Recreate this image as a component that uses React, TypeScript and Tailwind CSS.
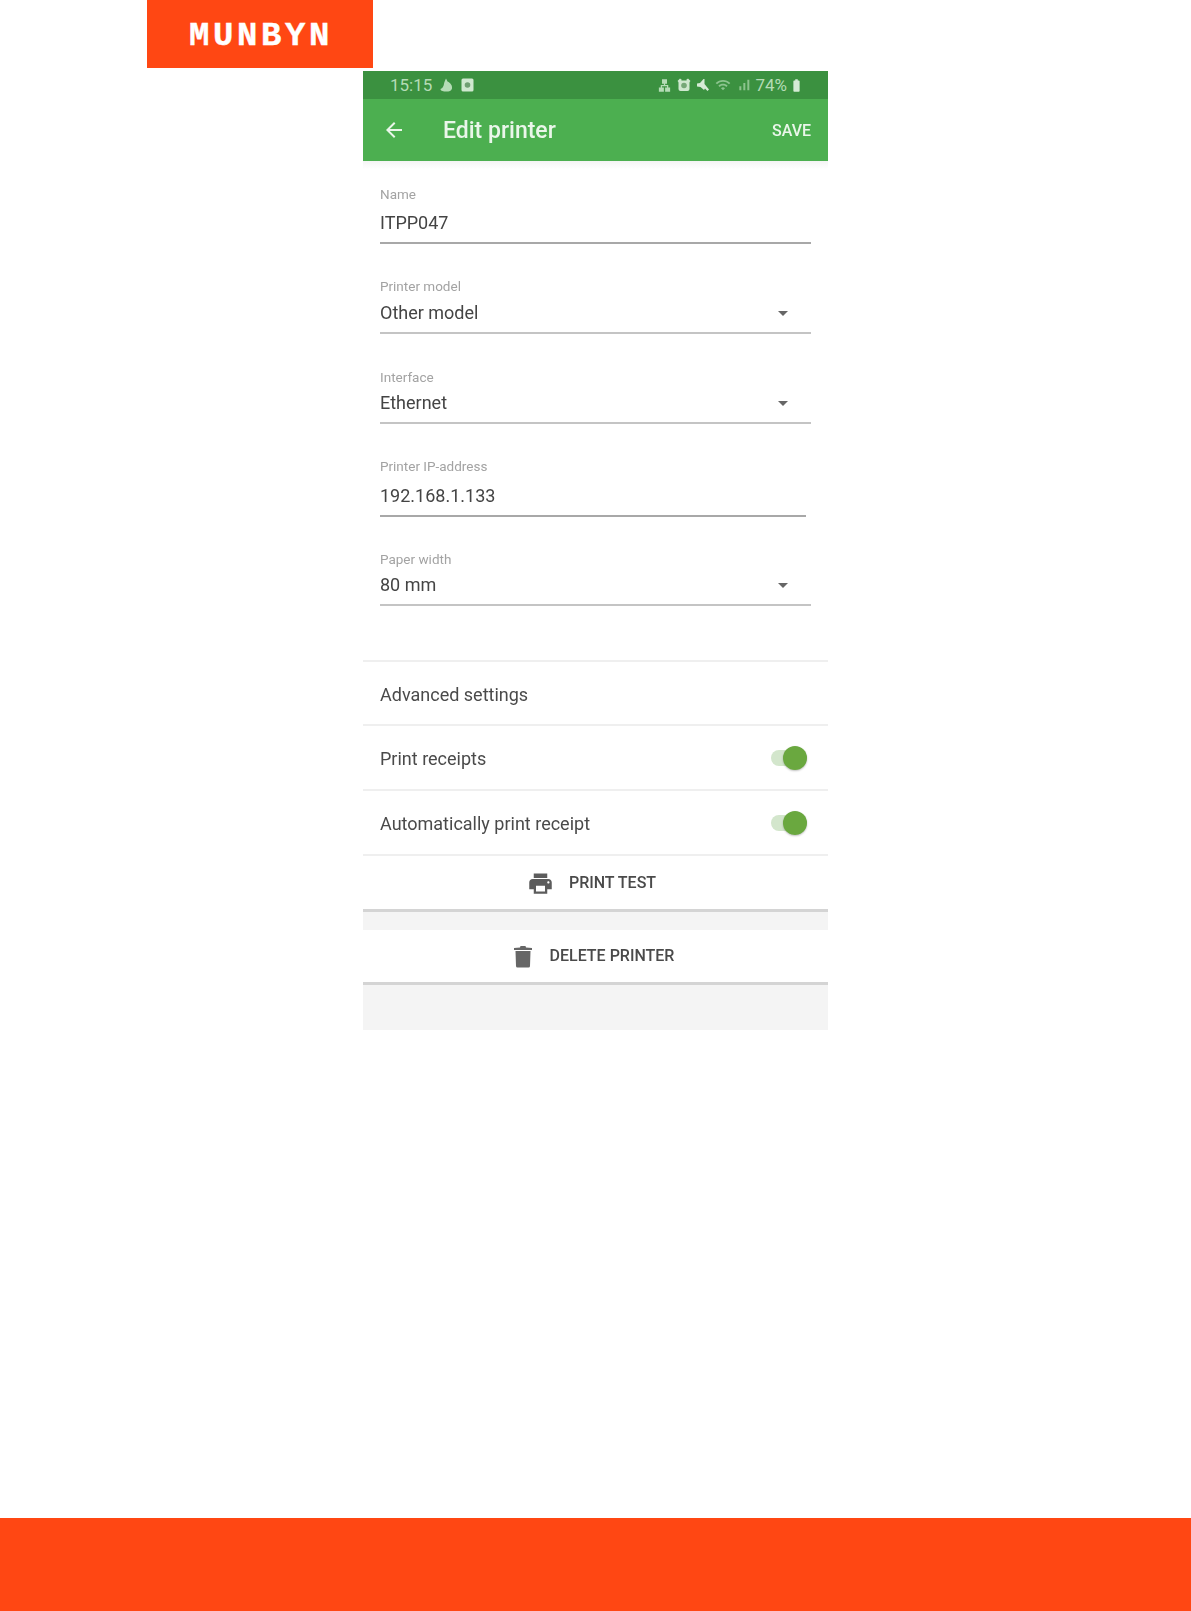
import React from "react";
import { MdArrowBack, MdArrowDropDown, MdPrint, MdWifi, MdSignalCellularAlt, MdBatteryFull, MdLan } from "react-icons/md";

const fields = [
  { label: "Name", value: "ITPP047", box: "mt-0", valueGap: "mt-[9px]", lineGap: "mt-[7px]", line: "w-[431px] bg-[#a8a8a8]", drop: false },
  { label: "Printer model", value: "Other model", box: "mt-[34px]", valueGap: "mt-[7px]", lineGap: "mt-[7px]", line: "w-[431px] bg-[#c4c4c4]", drop: true },
  { label: "Interface", value: "Ethernet", box: "mt-[35px]", valueGap: "mt-[6px]", lineGap: "mt-[7px]", line: "w-[431px] bg-[#c4c4c4]", drop: true },
  { label: "Printer IP-address", value: "192.168.1.133", box: "mt-[34px]", valueGap: "mt-[10px]", lineGap: "mt-[7px]", line: "w-[426px] bg-[#a8a8a8]", drop: false },
  { label: "Paper width", value: "80 mm", box: "mt-[34px]", valueGap: "mt-[6px]", lineGap: "mt-[7px]", line: "w-[431px] bg-[#c4c4c4]", drop: true },
];

function Field({ f }: { f: (typeof fields)[number] }) {
  return (
    <div className={`ml-[17px] ${f.box}`}>
      <div className="h-4 text-[13.5px] leading-4 text-[#a3a3a3]">{f.label}</div>
      <div className={`flex h-6 w-[431px] items-center justify-between ${f.valueGap}`}>
        <span className="text-[18px] leading-6 text-[#444444]">{f.value}</span>
        {f.drop && <MdArrowDropDown className="mr-[16px] text-[24px] text-[#666666]" />}
      </div>
      <div className={`h-[2px] ${f.lineGap} ${f.line}`} />
    </div>
  );
}

function Toggle() {
  return (
    <div className="relative mr-[21px] h-[16px] w-[36px] rounded-full bg-[#d3e6cc]">
      <div className="absolute right-0 top-[-4px] h-[24px] w-[24px] rounded-full bg-[#6aa83f] shadow-[0_1px_2px_rgba(0,0,0,0.25)]" />
    </div>
  );
}

function Row({ text, toggle }: { text: string; toggle?: boolean }) {
  return (
    <div className="flex h-[65px] items-center justify-between border-b-2 border-[#efefef] pl-[17px]">
      <span className="pt-[2px] text-[18px] text-[#4a4a4a]">{text}</span>
      {toggle && <Toggle />}
    </div>
  );
}

function Leaf() {
  return (
    <svg width="13" height="14" viewBox="0 0 13 14" fill="currentColor">
      <path d="M6 0.5 L7.5 3.5 C10.5 5 12.5 7.5 12 10.5 C11.5 13 9 13.5 6.5 13.5 C3.5 13.5 0.5 13 0.5 11 C2.5 10.5 3.5 8.5 4 6 C4.2 4.5 5 2.5 6 0.5 Z" />
    </svg>
  );
}

function ImageBox() {
  return (
    <svg width="13" height="14" viewBox="0 0 13 14">
      <rect x="0.5" y="0.5" width="12" height="13" rx="1.5" fill="#cfe8cf" />
      <circle cx="6.5" cy="7" r="2.8" fill="#6f9f72" />
    </svg>
  );
}

function Alarm() {
  return (
    <svg width="14" height="14" viewBox="0 0 14 14">
      <path d="M0.5 3 L3 0.5 L5 2 L2 4.5 Z M13.5 3 L11 0.5 L9 2 L12 4.5 Z" fill="#cfe8cf" />
      <rect x="1.5" y="2.5" width="11" height="10.5" rx="2" fill="#cfe8cf" />
      <circle cx="7" cy="7.5" r="2.8" fill="#76a878" />
    </svg>
  );
}

function Mute() {
  return (
    <svg width="14" height="14" viewBox="0 0 14 14" fill="#d5ebd5">
      <path d="M1 5.5 L4 5 L7.5 1 L8.5 1 L8.5 6 L13 11.5 L11.5 13 L9 10.5 L8 12 L4.5 9 L1 8.5 Z" />
    </svg>
  );
}

function Trash() {
  return (
    <svg width="20" height="23" viewBox="0 0 20 23" fill="#666666">
      <path d="M1 3 L7 2.5 L7.5 1 L12.5 1 L13 2.5 L19 3 L19 5 L1 5 Z" />
      <path d="M2.5 6 L17.5 6 L17 21 Q17 22.5 15.5 22.5 L4.5 22.5 Q3 22.5 3 21 Z" />
    </svg>
  );
}

export default function App() {
  return (
    <div className="flex h-[1611px] flex-col bg-white font-['Roboto',sans-serif]">
      <div className="ml-[147px] flex h-[68px] w-[226px] items-center justify-center bg-[#ff4713] pl-[2px] pt-[4px]">
        <span className="font-['Liberation_Mono',monospace] text-[34px] font-bold leading-none tracking-[3.6px] text-white [-webkit-text-stroke:0.4px_white]">MUNBYN</span>
      </div>
      <div className="ml-[363px] mt-[3px] w-[465px] blur-[0.5px]">
        <div className="flex h-[28px] items-center justify-between bg-[#3b9140] pl-[27px] pr-[24px] text-[#b5dcb6]">
          <div className="flex items-center gap-[8px]">
            <span className="text-[17px] leading-none">15:15</span>
            <Leaf />
            <ImageBox />
          </div>
          <div className="flex items-center gap-[5px]">
            <MdLan className="text-[15px]" />
            <Alarm />
            <Mute />
            <MdWifi className="text-[16px] text-[#8cc48e]" />
            <MdSignalCellularAlt className="text-[16px] text-[#8cc48e]" />
            <span className="-ml-[2px] text-[17px] leading-none">74%</span>
            <MdBatteryFull className="-ml-[3px] text-[15px] text-[#d5ebd5]" />
          </div>
        </div>
        <div className="flex h-[62px] items-center bg-[#4caf50] text-[#eaf6ea]">
          <MdArrowBack className="ml-[19px] text-[24px]" />
          <span className="ml-[37px] pt-[2px] text-[23px] font-medium">Edit printer</span>
          <span className="ml-auto mr-[17px] pt-[2px] text-[16px] font-medium">SAVE</span>
        </div>
        <div className="h-[8px] bg-gradient-to-b from-[#f4f4f4] to-white" />
        <div className="pt-[17px]">
          {fields.map((f) => (
            <Field key={f.label} f={f} />
          ))}
        </div>
        <div className="mt-[54px] h-[2px] bg-[#efefef]" />
        <div className="flex h-[64px] items-center border-b-2 border-[#efefef] pl-[17px]">
          <span className="pt-[2px] text-[18px] text-[#4a4a4a]">Advanced settings</span>
        </div>
        <Row text="Print receipts" toggle />
        <Row text="Automatically print receipt" toggle />
        <div className="flex h-[56px] items-center justify-center gap-[15px] border-b-[3px] border-[#d4d4d4] pr-[8px] pt-[1px]">
          <MdPrint className="text-[27px] text-[#5c5c5c]" />
          <span className="text-[16px] font-medium text-[#4a4a4a]">PRINT TEST</span>
        </div>
        <div className="h-[18px] bg-[#f4f4f4]" />
        <div className="flex h-[55px] items-center justify-center gap-[17px] border-b-[3px] border-[#d4d4d4] pr-[4px]">
          <Trash />
          <span className="text-[16px] font-medium text-[#4a4a4a]">DELETE PRINTER</span>
        </div>
        <div className="h-[45px] bg-[#f4f4f4]" />
      </div>
      <div className="mt-auto h-[93px] bg-[#ff4713]" />
    </div>
  );
}
